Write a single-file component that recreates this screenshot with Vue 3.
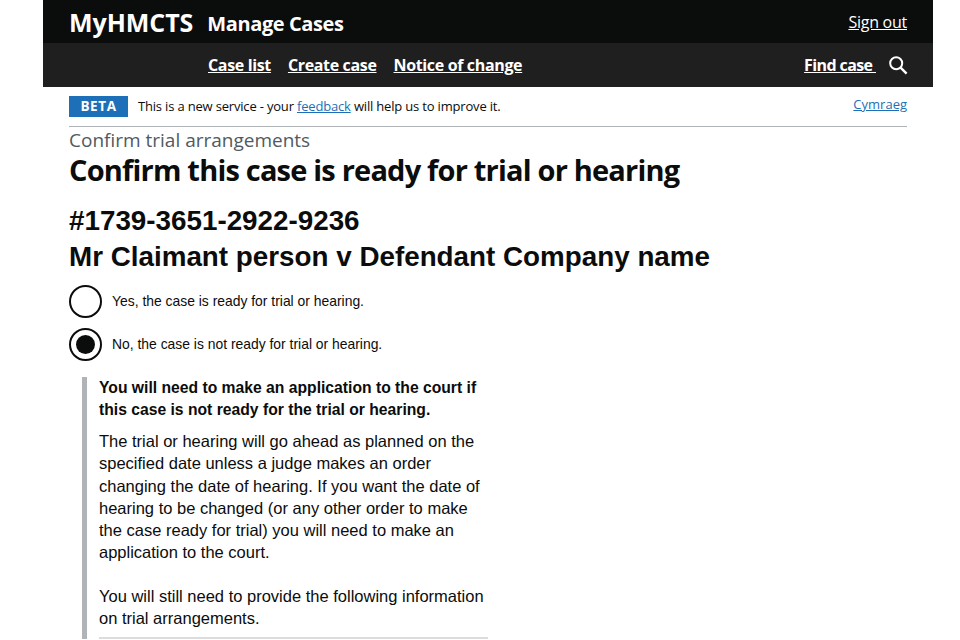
<template>
  <div class="page">
    <header class="topbar">
      <div class="brand">
        <span class="brand-name">MyHMCTS</span>
        <span class="brand-service">Manage Cases</span>
      </div>
      <a class="sign-out" href="#">Sign out</a>
    </header>

    <nav class="navbar">
      <div class="nav-links">
        <a v-for="link in navLinks" :key="link" href="#">{{ link }}</a>
      </div>
      <div class="find-case">
        <a href="#">Find case&nbsp;</a>
        <svg width="20" height="20" viewBox="0 0 20 20" fill="none" stroke="#fff" stroke-width="2">
          <circle cx="8.2" cy="8.2" r="6" />
          <path d="M12.6 12.6 18.6 18.6" stroke-width="2.4" />
        </svg>
      </div>
    </nav>

    <main class="content">
      <div class="phase">
        <div class="phase-left">
          <strong class="tag">BETA</strong>
          <span>This is a new service - your <a href="#">feedback</a> will help us to improve it.</span>
        </div>
        <a class="lang" href="#">Cymraeg</a>
      </div>

      <div class="caption">Confirm trial arrangements</div>
      <h1>Confirm this case is ready for trial or hearing</h1>

      <h2>#1739-3651-2922-9236<br />Mr Claimant person v Defendant Company name</h2>

      <div class="radios">
        <label v-for="opt in options" :key="opt.id" class="radio">
          <span class="radio-mark" :class="{ checked: opt.id === selected }"></span>
          <span>{{ opt.label }}</span>
        </label>
      </div>

      <div class="inset">
        <p class="inset-title">You will need to make an application to the court if this case is not ready for the trial or hearing.</p>
        <p>The trial or hearing will go ahead as planned on the specified date unless a judge makes an order changing the date of hearing. If you want the date of hearing to be changed (or any other order to make the case ready for trial) you will need to make an application to the court.</p>
        <p>You will still need to provide the following information on trial arrangements.</p>
        <div class="rule"></div>
      </div>
    </main>
  </div>
</template>

<script setup>
const navLinks = ["Case list", "Create case", "Notice of change"];
const selected = "no";
const options = [
  { id: "yes", label: "Yes, the case is ready for trial or hearing." },
  { id: "no", label: "No, the case is not ready for trial or hearing." },
];
</script>

<style>
html,
body {
  height: 100%;
  overflow: hidden;
  background: #fff;
}
</style>

<style scoped>
.page {
  width: 890px;
  height: 640px;
  margin-left: 43px;
  overflow: hidden;
  font-family: "Open Sans", sans-serif;
  color: #0b0c0c;
}

.topbar {
  height: 43px;
  background: #0b0c0c;
  display: flex;
  align-items: center;
  justify-content: space-between;
  padding: 0 26px;
  color: #fff;
}

.brand {
  display: flex;
  align-items: baseline;
  gap: 14px;
}

.brand-name {
  font-size: 25px;
  font-weight: 700;
  letter-spacing: -0.05px;
}

.brand-service {
  font-size: 20px;
  font-weight: 700;
  letter-spacing: -0.4px;
  position: relative;
  top: -1px;
}

.sign-out {
  color: #fff;
  font-size: 16px;
  letter-spacing: -0.25px;
}

.navbar {
  height: 44px;
  background: #1f1f1f;
  display: flex;
  align-items: center;
  justify-content: space-between;
  padding: 0 26px 0 165px;
}

.nav-links {
  display: flex;
  gap: 17px;
}

.navbar a {
  color: #fff;
  font-size: 16px;
  font-weight: 700;
  letter-spacing: -0.35px;
}

.navbar .find-case a {
  letter-spacing: -0.6px;
}

.find-case {
  display: flex;
  align-items: center;
  gap: 11px;
}

.find-case svg {
  position: relative;
  left: 1px;
}

.content {
  padding: 0 26px;
}

.phase {
  height: 40px;
  box-sizing: border-box;
  border-bottom: 1px solid #b1b4b6;
  display: flex;
  justify-content: space-between;
  font-size: 13px;
  letter-spacing: -0.18px;
  padding-top: 9px;
}

.phase-left {
  display: flex;
  align-items: flex-start;
  gap: 10px;
}

.phase-left span {
  line-height: 21px;
}

.tag {
  background: #1d70b8;
  color: #fff;
  width: 59px;
  height: 21px;
  line-height: 21px;
  text-align: center;
  font-size: 13.5px;
  letter-spacing: 0.6px;
}

.phase a,
.lang {
  color: #1d70b8;
}

.lang {
  line-height: 17px;
  letter-spacing: 0;
}

.caption {
  font-size: 19px;
  line-height: 26px;
  color: #505a5f;
  letter-spacing: 0;
}

h1 {
  margin: 0;
  font-size: 29px;
  line-height: 34px;
  font-weight: 700;
  letter-spacing: -0.8px;
}

h2 {
  margin: 16px 0 0;
  font-family: "Liberation Sans", Arial, sans-serif;
  font-size: 27.8px;
  line-height: 36px;
  font-weight: 700;
}

.radios {
  margin-top: 10px;
  display: flex;
  flex-direction: column;
  gap: 10px;
}

.radio {
  display: flex;
  align-items: center;
  gap: 10px;
  height: 33px;
  font-family: "Liberation Sans", Arial, sans-serif;
  font-size: 13.9px;
}

.radio span:last-child {
  position: relative;
  top: -1px;
}

.radio-mark {
  width: 33px;
  height: 33px;
  box-sizing: border-box;
  border: 2px solid #0b0c0c;
  border-radius: 50%;
  display: flex;
  align-items: center;
  justify-content: center;
}

.radio-mark.checked::after {
  content: "";
  width: 19px;
  height: 19px;
  border-radius: 50%;
  background: #0b0c0c;
}

.inset {
  margin: 16px 0 0 13px;
  width: 406px;
  box-sizing: border-box;
  border-left: 5px solid #b1b4b6;
  padding-left: 12px;
  font-family: "Liberation Sans", Arial, sans-serif;
  font-size: 16.5px;
  line-height: 22.3px;
}

.inset p {
  margin: 0 0 21px;
}

.inset .inset-title {
  font-size: 15.7px;
  line-height: 22px;
  font-weight: 700;
  margin-bottom: 9px;
}

.inset p:nth-of-type(3) {
  margin-bottom: 8px;
}

.rule {
  height: 2px;
  background: #dcdcdc;
}
</style>
